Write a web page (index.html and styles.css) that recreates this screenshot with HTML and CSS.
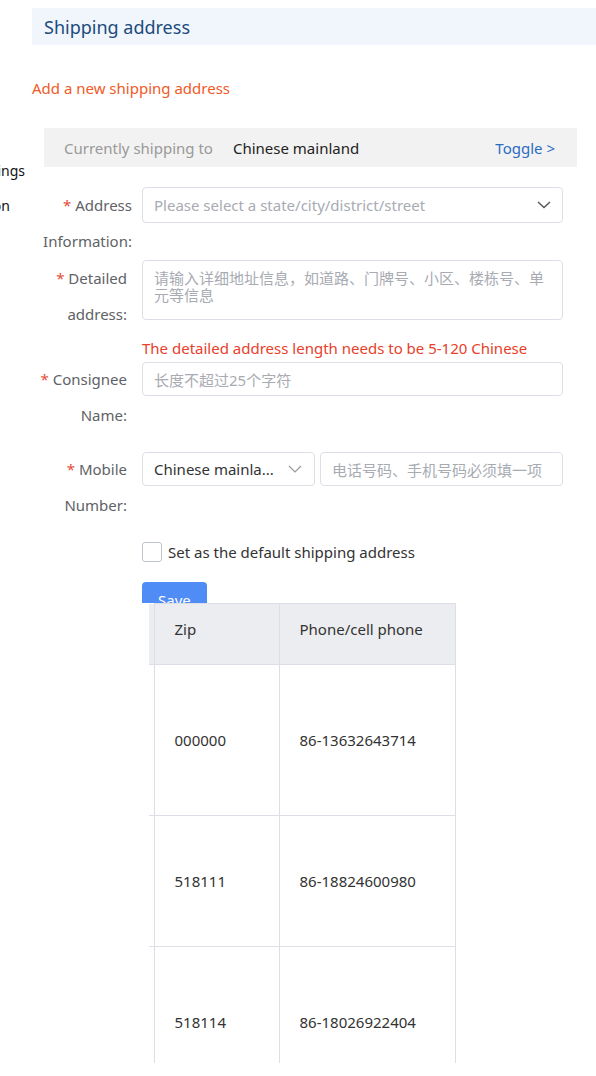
FILE: index.html
```html
<!DOCTYPE html>
<html lang="en">
<head>
  <meta charset="UTF-8">
  <title>Shipping address</title>
  <link rel="stylesheet" href="styles.css">
</head>
<body>
  <div class="page">
    <aside class="sidebar">
      <div class="side-item side-settings">Settings</div>
      <div class="side-item side-verify">Verification</div>
    </aside>

    <main class="main">
      <div class="title-bar">
        <h2>Shipping address</h2>
      </div>

      <a class="add-link" href="#">Add a new shipping address</a>

      <div class="region-bar">
        <span class="region-label">Currently shipping to</span>
        <span class="region-value">Chinese mainland</span>
        <a class="region-toggle" href="#">Toggle &gt;</a>
      </div>

      <form class="address-form">
        <div class="form-row row-address">
          <div class="form-label"><span class="label-text"><span class="req">*</span> Address<br>Information:</span></div>
          <div class="form-field">
            <div class="select">
              <span class="placeholder">Please select a state/city/district/street</span>
              <svg class="chevron" width="14" height="8" viewBox="0 0 14 8"><path d="M1 1l6 5.5L13 1" fill="none" stroke="#555" stroke-width="1.4"/></svg>
            </div>
          </div>
        </div>

        <div class="form-row row-detail">
          <div class="form-label"><span class="label-text"><span class="req">*</span> Detailed<br>address:</span></div>
          <div class="form-field">
            <div class="textarea"><span class="placeholder">请输入详细地址信息，如道路、门牌号、小区、楼栋号、单元等信息</span></div>
            <div class="error">The detailed address length needs to be 5-120 Chinese</div>
          </div>
        </div>

        <div class="form-row row-name">
          <div class="form-label"><span class="label-text"><span class="req">*</span> Consignee<br>Name:</span></div>
          <div class="form-field">
            <div class="input"><span class="placeholder">长度不超过25个字符</span></div>
          </div>
        </div>

        <div class="form-row row-mobile">
          <div class="form-label"><span class="label-text"><span class="req">*</span> Mobile<br>Number:</span></div>
          <div class="form-field mobile-field">
            <div class="select select-area">
              <span class="value">Chinese mainla...</span>
              <svg class="chevron" width="14" height="8" viewBox="0 0 14 8"><path d="M1 1l6 6 6-6" fill="none" stroke="#999" stroke-width="1.2"/></svg>
            </div>
            <div class="input input-phone"><span class="placeholder">电话号码、手机号码必须填一项</span></div>
          </div>
        </div>

        <label class="check-row">
          <span class="checkbox"></span>
          <span>Set as the default shipping address</span>
        </label>

        <div class="save-wrap">
          <button type="button" class="save-btn">Save</button>
        </div>

        <div class="table-wrap">
          <table class="addr-table">
            <colgroup>
              <col class="col-hidden">
              <col class="col-zip">
              <col class="col-phone">
            </colgroup>
            <thead>
              <tr>
                <th class="cell-hidden"></th>
                <th>Zip</th>
                <th>Phone/cell phone</th>
              </tr>
            </thead>
            <tbody>
              <tr class="row-tall">
                <td class="cell-hidden"></td>
                <td>000000</td>
                <td>86-13632643714</td>
              </tr>
              <tr class="row-mid">
                <td class="cell-hidden"></td>
                <td>518111</td>
                <td>86-18824600980</td>
              </tr>
              <tr class="row-tall">
                <td class="cell-hidden"></td>
                <td>518114</td>
                <td>86-18026922404</td>
              </tr>
            </tbody>
          </table>
        </div>
      </form>
    </main>
  </div>
</body>
</html>
```

FILE: styles.css
```css
body {
  margin: 0;
  font-family: "Noto Sans", "Noto Sans CJK SC", sans-serif;
  font-size: 15px;
  color: #333;
  background: white;
  overflow: hidden;
}
.page {
  display: flex;
  align-items: flex-start;
}
.sidebar {
  flex: 0 0 32px;
  overflow: hidden;
  padding-top: 153px;
  font-size: 14px;
  color: #111;
}
.side-item {
  white-space: nowrap;
  line-height: 35px;
  display: flex;
  justify-content: flex-end;
}
.side-settings { padding-right: 7px; }
.side-verify { padding-right: 22px; }

.main {
  flex: 1;
  padding-top: 8px;
  min-width: 0;
}
.title-bar {
  background: #f1f6fc;
  height: 37px;
  display: flex;
  align-items: center;
  padding-left: 12px;
}
.title-bar h2 {
  margin: 0;
  font-size: 18px;
  font-weight: normal;
  color: #1b4b7c;
}
.add-link {
  display: block;
  margin-top: 33px;
  line-height: 20px;
  color: #f05a28;
  text-decoration: none;
}
.region-bar {
  margin: 30px 0 0 12px;
  width: 533px;
  height: 39px;
  background: #f2f2f2;
  display: flex;
  align-items: center;
  padding: 0 22px 0 20px;
  box-sizing: border-box;
}
.region-label { color: #999; }
.region-value { color: #222; margin-left: 20px; }
.region-toggle {
  margin-left: auto;
  color: #2b6cc4;
  text-decoration: none;
}

.address-form {
  margin: 20px 0 0 12px;
  width: 519px;
}
.form-row {
  display: flex;
  align-items: flex-start;
}
.form-label {
  flex: 0 0 108px;
  box-sizing: border-box;
  margin-left: -10px;
  padding-right: 15px;
  text-align: right;
  line-height: 36px;
  color: #606266;
}
.row-address .form-label { padding-right: 10px; }
.label-text {
  display: inline-block;
  white-space: nowrap;
}
.req { color: #e34d3b; }
.form-field {
  flex: 1;
  min-width: 0;
}
.row-address { margin-bottom: 1px; }
.row-detail { margin-bottom: 3px; }
.row-name { margin-bottom: 18px; }
.row-name .form-field { padding-top: 1px; }
.row-mobile .form-field { padding-top: 1px; }

.select, .input, .textarea {
  border: 1px solid #dcdfe6;
  border-radius: 4px;
  box-sizing: border-box;
  padding: 0 11px;
  display: flex;
  align-items: center;
  background: white;
}
.select { height: 36px; justify-content: space-between; }
.input { height: 34px; }
.textarea {
  height: 60px;
  align-items: flex-start;
  padding-top: 9px;
  line-height: 17px;
}
.placeholder { color: #a8abb2; white-space: nowrap; }
.textarea .placeholder { white-space: normal; }
.value { color: #333; white-space: nowrap; }
.chevron { flex: none; }
.error {
  margin-top: 18px;
  line-height: 20px;
  color: #e8402a;
  white-space: nowrap;
}
.mobile-field {
  display: flex;
  gap: 5px;
}
.select-area {
  flex: 0 0 173px;
  height: 34px;
  padding-right: 12px;
}
.input-phone { flex: 1; }

.check-row {
  display: flex;
  align-items: center;
  gap: 6px;
  margin: 19px 0 0 98px;
  line-height: 20px;
}
.checkbox {
  width: 18px;
  height: 18px;
  border: 1px solid #c0c4cc;
  border-radius: 3px;
  background: white;
}
.save-wrap {
  margin: 20px 0 0 98px;
  height: 21px;
  overflow: hidden;
}
.save-btn {
  background: #4f8cf6;
  color: white;
  border: none;
  border-radius: 4px;
  height: 36px;
  padding: 0 16px;
  font: inherit;
}

.table-wrap {
  margin-left: 105px;
  height: 460px;
  overflow: hidden;
}
.addr-table {
  border-collapse: collapse;
  table-layout: fixed;
  width: 306px;
}
.col-hidden { width: 5px; }
.col-zip { width: 125px; }
.col-phone { width: 176px; }
.addr-table th, .addr-table td {
  border: 1px solid #dcdfe6;
  text-align: left;
  padding: 0 20px;
  white-space: nowrap;
  line-height: 20px;
}
.addr-table th {
  background: #ebedf0;
  font-weight: normal;
  height: 60px;
  box-sizing: border-box;
  padding-top: 15px;
  padding-bottom: 25px;
  vertical-align: top;
}
.addr-table .cell-hidden {
  padding: 0;
  border-left: none;
}
.addr-table thead .cell-hidden { border-top: none; }
.row-tall { height: 151px; }
.row-mid { height: 131px; }
```
